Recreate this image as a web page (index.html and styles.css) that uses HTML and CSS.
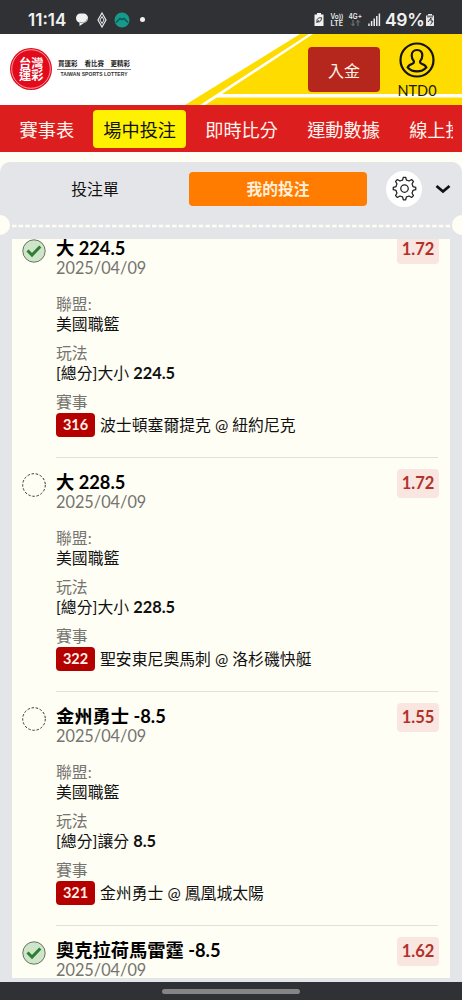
FILE: index.html
```html
<!DOCTYPE html>
<html lang="zh-Hant">
<head>
<meta charset="utf-8">
<title>台灣運彩</title>
<link rel="stylesheet" href="styles.css">
</head>
<body>
<div class="app">
  <div class="status">
    <span class="clock">11:14</span>
    <svg class="status-left" width="74" height="20" viewBox="0 0 74 20">
      <path d="M1 8c0-2.600 2-4.500 4.500-4.500h2.500c3 0 5 2 5 4.500s-1.500 4.500-4 5L4.500 16v-3.500C2.300 12 1 10.400 1 8z" fill="#f1f1f1"/>
      <path d="M5 12.300c3.500 1.200 6.500-.3 7.300-3.800" stroke="#77787b" stroke-width=".8" fill="none"/>
      <path d="M27 3l4 7-4 7-4-7z" fill="none" stroke="#e8e8e8" stroke-width="1.200"/>
      <path d="M27 6.500l2 3.500-2 3.500-2-3.500z" fill="none" stroke="#e8e8e8" stroke-width="1"/>
      <circle cx="47" cy="10" r="7.500" fill="#169a8a"/>
      <path d="M41 12.500l4-4 2 1 2-1 4 4" fill="none" stroke="#0d5a55" stroke-width="1.600"/>
      <circle cx="67.500" cy="9.500" r="2.500" fill="#f1f1f1"/>
    </svg>
    <span class="spacer"></span>
    <svg class="status-right" width="72" height="20" viewBox="0 0 72 20">
      <path d="M3 3h4v1.500h2.500v11.500h-9V4.500H3z" fill="#f1f1f1"/>
      <path d="M3 12c-.5-3 1.200-4.500 4.500-4.300 0 3-1.300 4.700-4 4.100M2.500 13l2.500-2.800" stroke="#303134" stroke-width="1" fill="none"/>
      <text x="16.500" y="8.800" class="net" textLength="13" lengthAdjust="spacingAndGlyphs">Vo))</text>
      <text x="16.500" y="16" class="net" textLength="12.500" lengthAdjust="spacingAndGlyphs">LTE</text>
      <text x="34.500" y="8.800" class="net" textLength="13.500" lengthAdjust="spacingAndGlyphs">4G+</text>
      <path d="M39 10v5.500m-1.800-1.800l1.800 1.800 1.800-1.800M44 16v-5.500m-1.800 1.800l1.800-1.800 1.800 1.800" stroke="#85868a" fill="none" stroke-width=".9"/>
      <path d="M55 13.500v2.500M57.600 11v5M60.200 8.500v7.500M62.800 6v10M65.400 3.500v12.500" stroke="#ededed" stroke-width="1.500"/>
    </svg>
    <span class="pct">49%</span>
    <svg class="batt" width="10" height="14" viewBox="0 0 10 14">
      <path d="M3 1h4v1.500h2V13H1V2.500h2z" fill="#e8e8e8"/><path d="M3 9l3-4v3h2l-2.500 3.500" fill="none" stroke="#303134" stroke-width="1"/>
      <path d="M2 2.500h6v2H2z" fill="#77787b"/>
    </svg>
  </div>

  <header class="header">
    <svg class="header-bg" width="462" height="71" viewBox="0 0 462 71">
      <path d="M300 0H462V71H185z" fill="#ffdc00"/>
      <path d="M309 0h4L222 60H462v3.500H217L205 71h-5z" fill="#fff"/>
    </svg>
    <svg class="logo" width="124" height="44" viewBox="0 0 124 44">
      <circle cx="22" cy="22" r="21" fill="#e30a1b"/>
      <circle cx="22" cy="22" r="19.300" fill="none" stroke="#fff" stroke-width=".6"/>
      <text x="10" y="20.500" class="seal" textLength="24.500" lengthAdjust="spacingAndGlyphs">台灣</text>
      <text x="10" y="33" class="seal" textLength="24.500" lengthAdjust="spacingAndGlyphs">運彩</text>
      <g class="slogan">
        <text x="49" y="19.300" textLength="19.500">買運彩</text>
        <text x="75.500" y="19.300" textLength="19.500">看比賽</text>
        <text x="101.500" y="19.300" textLength="19.500">更精彩</text>
      </g>
      <path d="M48 22.500h74" stroke="#555" stroke-width=".7"/>
      <text x="51.500" y="29" class="eng" textLength="67">TAIWAN SPORTS LOTTERY</text>
    </svg>
    <span class="spacer"></span>
    <button class="deposit">入金</button>
    <div class="account">
      <svg width="36" height="36" viewBox="0 0 36 36" fill="none" stroke="#15120a">
        <circle cx="18" cy="18" r="16.500" stroke-width="2.200"/>
        <path d="M18 8c3.600 0 5.300 2.500 5.300 5.500 0 2.400-.8 4.300-2.200 5.700-.3 1.700.4 2.200 2 2.800 2.200.8 3.700 1.500 4.200 3.400C25 28 21.800 29.300 18 29.300S11 28 8.700 25.400c.5-1.900 2-2.600 4.200-3.400 1.600-.6 2.300-1.100 2-2.800-1.400-1.400-2.200-3.300-2.200-5.700C12.700 10.500 14.400 8 18 8z" stroke-width="2.200"/>
      </svg>
      <span class="balance">NTD0</span>
    </div>
  </header>

  <nav class="nav"><div class="nav-scroll">
    <a>賽事表</a><a class="on">場中投注</a><a>即時比分</a><a>運動數據</a><a>線上投注</a>
  </div></nav>

  <main class="panel">
    <div class="tabs">
      <span class="tab">投注單</span>
      <span class="tab active">我的投注</span>
      <span class="gear">
        <svg width="25" height="25" viewBox="0 0 26 26" fill="none" stroke="#222" stroke-width="1.300" stroke-linejoin="round">
          <path d="M11.800 1.300h2.400l.8 2.900q1.500.3 2.700 1l2.700-1.500 1.900 1.900-1.500 2.700q.7 1.200 1 2.700l2.900.8v2.400l-2.900.8q-.3 1.500-1 2.700l1.500 2.700-1.900 1.900-2.700-1.500q-1.200.7-2.700 1l-.8 2.900h-2.400l-.8-2.900q-1.500-.3-2.700-1l-2.700 1.500-1.900-1.900 1.500-2.700q-.7-1.200-1-2.700l-2.900-.8v-2.400l2.900-.8q.3-1.500 1-2.700L3.700 5.600l1.900-1.900 2.700 1.500q1.200-.7 2.700-1z"/>
          <circle cx="13" cy="13" r="3.900"/>
        </svg>
      </span>
      <svg class="chev" width="16" height="10" viewBox="0 0 16 10"><path d="M1.500 2L8 7.500 14.500 2" fill="none" stroke="#111" stroke-width="2.800"/></svg>
    </div>
    <div class="tear"><i class="notch"></i><svg class="dash" width="442" height="4" viewBox="0 0 442 4"><path d="M2 2h438" stroke="#fffef5" stroke-width="2.400" stroke-dasharray="4.500 2.170"/></svg><i class="notch"></i></div>

    <div class="list">
      <article class="bet">
        <svg class="mark" width="24" height="24" viewBox="0 0 24 24"><circle cx="12" cy="12" r="11.200" fill="#cfe5c9" stroke="#56694f" stroke-width=".9"/><path d="M5.500 11.500l4.500 4.500L18.300 7.500" fill="none" stroke="#2e7d32" stroke-width="3"/></svg>
        <div class="info">
          <div class="title">大 224.5</div><div class="date">2025/04/09</div>
          <div class="label first">聯盟:</div><div class="value">美國職籃</div>
          <div class="label">玩法</div><div class="value">[總分]大小 <b>224.5</b></div>
          <div class="label">賽事</div><div class="match"><b class="no">316</b>波士頓塞爾提克 @ 紐約尼克</div>
          <span class="odds">1.72</span>
        </div>
      </article>
      <article class="bet">
        <svg class="mark" width="24" height="24" viewBox="0 0 24 24"><circle cx="12" cy="12" r="11.300" fill="none" stroke="#333" stroke-width="1" stroke-dasharray="2.500 1.700"/></svg>
        <div class="info">
          <div class="title">大 228.5</div><div class="date">2025/04/09</div>
          <div class="label first">聯盟:</div><div class="value">美國職籃</div>
          <div class="label">玩法</div><div class="value">[總分]大小 <b>228.5</b></div>
          <div class="label">賽事</div><div class="match"><b class="no">322</b>聖安東尼奧馬刺 @ 洛杉磯快艇</div>
          <span class="odds">1.72</span>
        </div>
      </article>
      <article class="bet">
        <svg class="mark" width="24" height="24" viewBox="0 0 24 24"><circle cx="12" cy="12" r="11.300" fill="none" stroke="#333" stroke-width="1" stroke-dasharray="2.500 1.700"/></svg>
        <div class="info">
          <div class="title">金州勇士 -8.5</div><div class="date">2025/04/09</div>
          <div class="label first">聯盟:</div><div class="value">美國職籃</div>
          <div class="label">玩法</div><div class="value">[總分]讓分 <b>8.5</b></div>
          <div class="label">賽事</div><div class="match"><b class="no">321</b>金州勇士 @ 鳳凰城太陽</div>
          <span class="odds">1.55</span>
        </div>
      </article>
      <article class="bet">
        <svg class="mark" width="24" height="24" viewBox="0 0 24 24"><circle cx="12" cy="12" r="11.200" fill="#cfe5c9" stroke="#56694f" stroke-width=".9"/><path d="M5.500 11.500l4.500 4.500L18.300 7.500" fill="none" stroke="#2e7d32" stroke-width="3"/></svg>
        <div class="info">
          <div class="title">奧克拉荷馬雷霆 -8.5</div><div class="date">2025/04/09</div>
          <span class="odds">1.62</span>
        </div>
      </article>
    </div>
  </main>
  <div class="homebar"><i></i></div>
</div>
</body>
</html>
```

FILE: styles.css
```css
* { box-sizing: border-box; }
body { margin: 0; background: #fffef5; font-family: Lato, "Noto Sans CJK TC", sans-serif; color: #111; }
.app { width: 462px; height: 1000px; overflow: hidden; display: flex; flex-direction: column; white-space: nowrap; }
.spacer { flex: 1; }

.status { height: 34px; flex: none; background: #303134; color: #f1f1f1; display: flex; align-items: center; padding: 5px 27px 0 28px; font-family: Inter, Roboto, sans-serif; font-weight: 600; }
.clock { font-size: 17px; width: 40px; line-height: 20px; }
.status-left { margin-left: 7px; }
.status-right { margin-right: -1px; }
.net { font: 600 7px Inter, sans-serif; fill: #ededed; }
.pct { font-size: 17.500px; width: 39px; letter-spacing: -.3px; line-height: 20px; }
.batt { margin-left: 1px; }

.header { height: 71px; flex: none; background: #fff; position: relative; display: flex; padding: 0 26px 0 9px; }
.header-bg { position: absolute; left: 0; top: 0; }
.logo { position: relative; margin-top: 13px; }
.seal { font: 700 12px "Noto Sans CJK TC", sans-serif; fill: #fff; }
.slogan { font: 700 6.500px "Noto Sans CJK TC", sans-serif; fill: #222; }
.eng { font: 700 5px "Liberation Sans", sans-serif; fill: #333; }
.deposit { position: relative; width: 72px; height: 45px; margin-top: 13px; border: 0; border-radius: 4px; background: #b5271d; color: #fff5e8; font: 16px Lato, "Noto Sans CJK TC", sans-serif; padding: 0; }
.account { position: relative; width: 38px; margin: 8px 0 0 18px; display: flex; flex-direction: column; align-items: center; height: 56px; }
.account svg { flex: none; }
.balance { font-size: 14.500px; line-height: 18px; margin-top: 4px; color: #221d00; }

.nav { height: 47px; flex: none; background: #dd1e1f; padding: 5px 9px 0 9.500px; }
.nav-scroll { overflow: hidden; display: flex; gap: 9.200px; }
.nav a { flex: none; height: 38px; line-height: 40px; padding: 0 10px; font-size: 18.200px; color: #fff5ee; border-radius: 4px; }
.nav a.on { background: #fff200; color: #111; }

.panel { margin-top: 10px; flex: 1; min-height: 0; background: #e4e5e9; border-radius: 10px 10px 0 0; padding-bottom: 4px; display: flex; flex-direction: column; }
.tabs { flex: none; display: flex; align-items: center; height: 53px; font-size: 15.800px; }
.tab { width: 178px; height: 34px; line-height: 34px; text-align: center; margin-left: 6px; }
.tab + .tab { margin-left: 5px; }
.active { background: #ff7c00; color: #fff1dc; border-radius: 4px; font-weight: 700; }
.gear { width: 36px; height: 36px; border-radius: 50%; background: #fff; margin-left: 19px; display: flex; align-items: center; justify-content: center; }
.chev { margin-left: 13px; }
.tear { flex: none; height: 20px; display: flex; align-items: center; justify-content: space-between; overflow: hidden; }
.notch { flex: none; width: 20px; height: 20px; border-radius: 50%; background: #fffef5; margin: 0 -10px; }
.dash { flex: none; margin-top: 1px; }

.list { margin: 4px 12px 0; flex: 1; min-height: 0; background: #fffef5; overflow: hidden; }
.bet { display: flex; padding-left: 10px; }
.bet:first-child { margin-top: -15px; }
.mark { flex: none; margin-top: 15px; }
.info { position: relative; width: 382px; height: 234px; flex: none; margin-left: 10px; padding-top: 14px; border-bottom: 1px solid #e4e1da; font-size: 15.850px; }
.title { font-size: 18.250px; line-height: 21px; font-weight: 700; color: #000; }
.date { line-height: 19px; margin-top: -1px; color: #757470; font-size: 16.300px; }
.label { line-height: 19px; color: #757470; margin-top: 9px; }
.label.first { margin-top: 17px; }
.value { line-height: 21px; }
.value b { font-size: 16.400px; }
.match { line-height: 24px; height: 24px; margin-top: 2px; display: flex; }
.no { width: 39px; height: 24px; line-height: 24px; border-radius: 4px; background: #b50000; color: #fff1e8; text-align: center; font-size: 14.500px; margin-right: 5px; }
.odds { position: absolute; right: -1px; top: 11px; width: 42px; height: 29px; line-height: 29px; text-align: center; border-radius: 4px; background: #f9e6e0; color: #b2312b; font-weight: 700; font-size: 16.500px; }

.homebar { height: 18px; flex: none; background: #303134; display: flex; justify-content: center; padding-top: 7px; }
.homebar i { width: 138px; height: 5px; border-radius: 3px; background: #858585; }
```
